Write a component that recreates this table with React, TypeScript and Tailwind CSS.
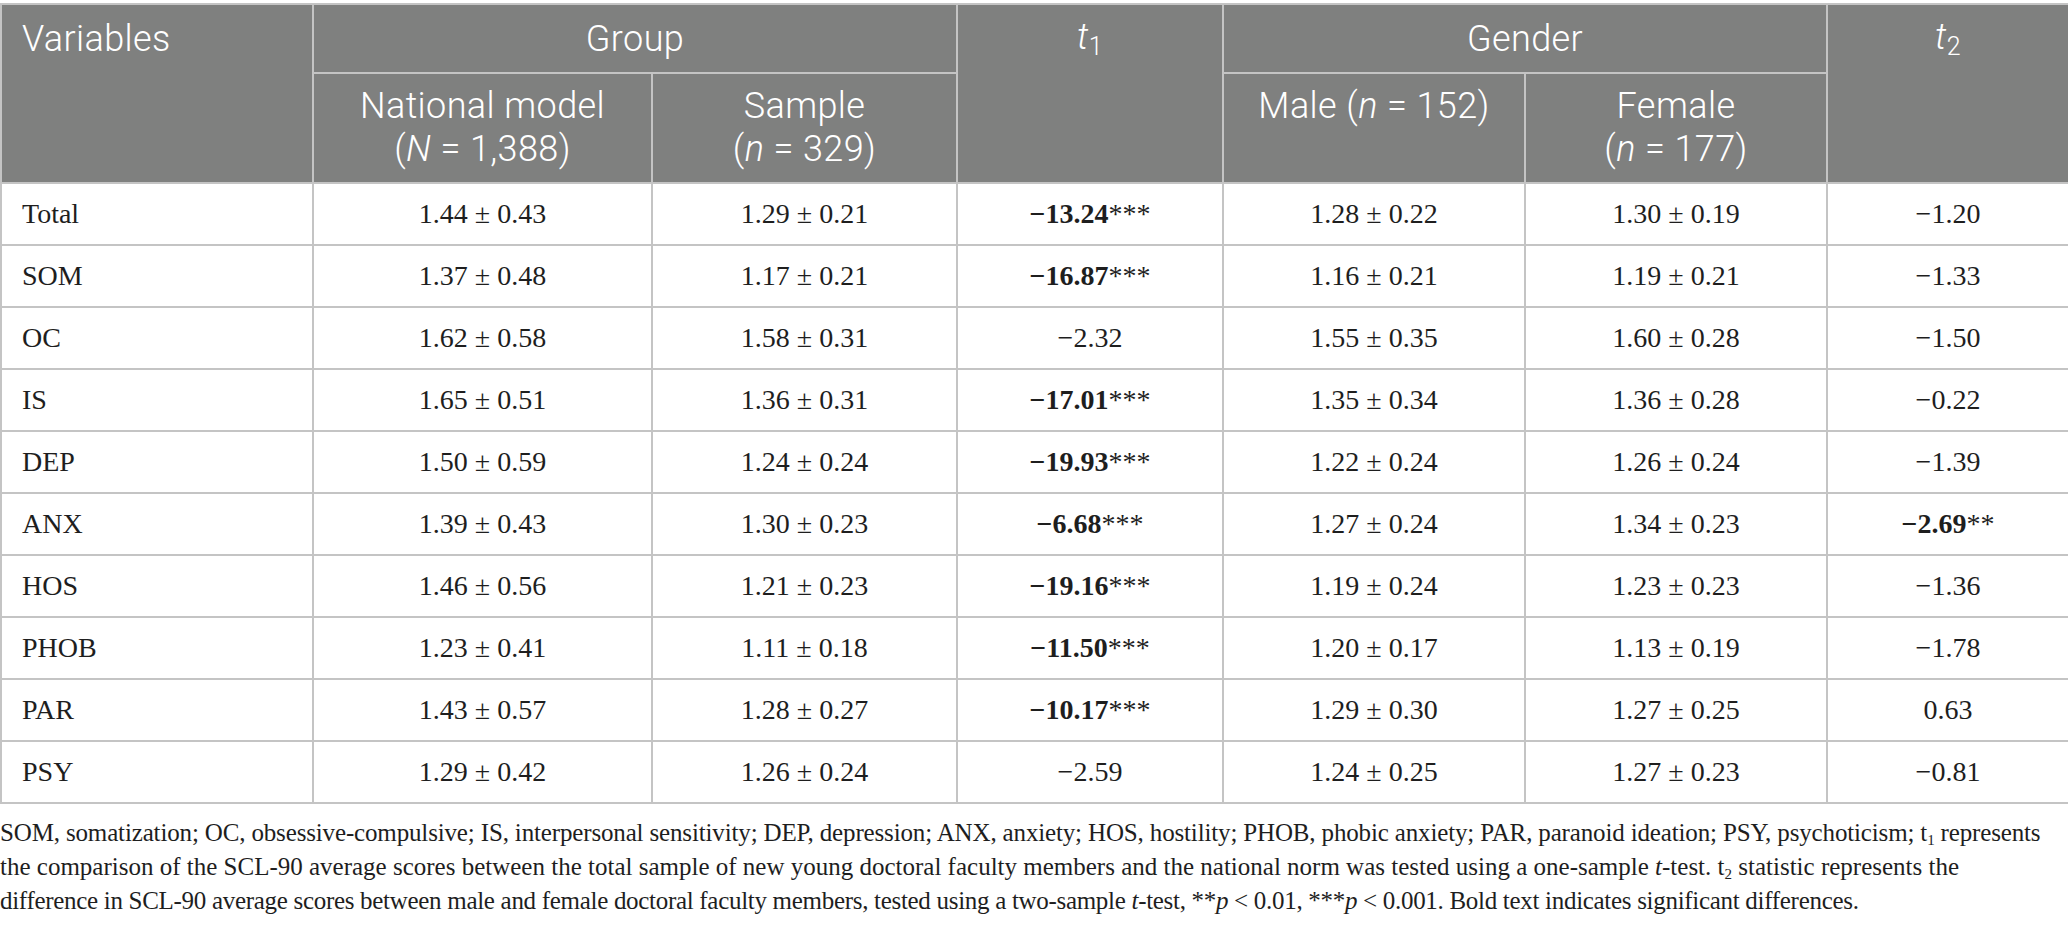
import React from 'react';

const rows = [
  { name: 'Total', nat: '1.44 ± 0.43', sample: '1.29 ± 0.21', t1: '−13.24', t1s: '***', male: '1.28 ± 0.22', female: '1.30 ± 0.19', t2: '−1.20', t2s: '' },
  { name: 'SOM', nat: '1.37 ± 0.48', sample: '1.17 ± 0.21', t1: '−16.87', t1s: '***', male: '1.16 ± 0.21', female: '1.19 ± 0.21', t2: '−1.33', t2s: '' },
  { name: 'OC', nat: '1.62 ± 0.58', sample: '1.58 ± 0.31', t1: '−2.32', t1s: '', male: '1.55 ± 0.35', female: '1.60 ± 0.28', t2: '−1.50', t2s: '' },
  { name: 'IS', nat: '1.65 ± 0.51', sample: '1.36 ± 0.31', t1: '−17.01', t1s: '***', male: '1.35 ± 0.34', female: '1.36 ± 0.28', t2: '−0.22', t2s: '' },
  { name: 'DEP', nat: '1.50 ± 0.59', sample: '1.24 ± 0.24', t1: '−19.93', t1s: '***', male: '1.22 ± 0.24', female: '1.26 ± 0.24', t2: '−1.39', t2s: '' },
  { name: 'ANX', nat: '1.39 ± 0.43', sample: '1.30 ± 0.23', t1: '−6.68', t1s: '***', male: '1.27 ± 0.24', female: '1.34 ± 0.23', t2: '−2.69', t2s: '**' },
  { name: 'HOS', nat: '1.46 ± 0.56', sample: '1.21 ± 0.23', t1: '−19.16', t1s: '***', male: '1.19 ± 0.24', female: '1.23 ± 0.23', t2: '−1.36', t2s: '' },
  { name: 'PHOB', nat: '1.23 ± 0.41', sample: '1.11 ± 0.18', t1: '−11.50', t1s: '***', male: '1.20 ± 0.17', female: '1.13 ± 0.19', t2: '−1.78', t2s: '' },
  { name: 'PAR', nat: '1.43 ± 0.57', sample: '1.28 ± 0.27', t1: '−10.17', t1s: '***', male: '1.29 ± 0.30', female: '1.27 ± 0.25', t2: '0.63', t2s: '' },
  { name: 'PSY', nat: '1.29 ± 0.42', sample: '1.26 ± 0.24', t1: '−2.59', t1s: '', male: '1.24 ± 0.25', female: '1.27 ± 0.23', t2: '−0.81', t2s: '' }
];

// value with optional significance stars; stars mean bold
const Stat = ({ v, s }: { v: string; s: string }) =>
  s ? (
    <>
      <span className="font-bold">{v}</span>
      {s}
    </>
  ) : (
    <>{v}</>
  );

const th = 'border-2 border-[#c4c4c4] align-top font-light';
const td = 'border-2 border-[#c4c4c4] text-center h-[62px]';

const App = () => {
  return (
    <div className="w-[2068px] bg-white pt-[3px] text-[#1e1e1e]">
      <table
        className="w-full table-fixed border-collapse"
        style={{ fontFamily: '"Liberation Serif", "DejaVu Serif", serif' }}
      >
        <colgroup>
          <col className="w-[312px]" />
          <col className="w-[339px]" />
          <col className="w-[305px]" />
          <col className="w-[266px]" />
          <col className="w-[302px]" />
          <col className="w-[302px]" />
          <col className="w-[242px]" />
        </colgroup>
        <thead
          className="bg-[#7f807f] text-white text-[36px] leading-[43px] tracking-[0.4px]"
          style={{ fontFamily: 'Roboto, "Open Sans", sans-serif' }}
        >
          <tr className="h-[69px]">
            <th rowSpan={2} className={`${th} text-left pl-[20px] pt-[13px]`}>Variables</th>
            <th colSpan={2} className={`${th} text-center pt-[13px]`}>Group</th>
            <th rowSpan={2} className={`${th} text-center pt-[11px]`}>
              <i>t</i>
              <sub className="text-[25px] not-italic">1</sub>
            </th>
            <th colSpan={2} className={`${th} text-center pt-[13px]`}>Gender</th>
            <th rowSpan={2} className={`${th} text-center pt-[11px]`}>
              <i>t</i>
              <sub className="text-[25px] not-italic">2</sub>
            </th>
          </tr>
          <tr className="h-[110px]">
            <th className={`${th} text-center pt-[11px]`}>
              National model
              <br />(<i>N</i> = 1,388)
            </th>
            <th className={`${th} text-center pt-[11px]`}>
              Sample
              <br />(<i>n</i> = 329)
            </th>
            <th className={`${th} text-center pt-[11px]`}>
              Male (<i>n</i> = 152)
            </th>
            <th className={`${th} text-center pt-[11px]`}>
              Female
              <br />(<i>n</i> = 177)
            </th>
          </tr>
        </thead>
        <tbody className="text-[28px]">
          {rows.map((r) => (
            <tr key={r.name}>
              <td className={`${td} !text-left pl-[20px]`}>{r.name}</td>
              <td className={td}>{r.nat}</td>
              <td className={td}>{r.sample}</td>
              <td className={td}>
                <Stat v={r.t1} s={r.t1s} />
              </td>
              <td className={td}>{r.male}</td>
              <td className={td}>{r.female}</td>
              <td className={td}>
                <Stat v={r.t2} s={r.t2s} />
              </td>
            </tr>
          ))}
        </tbody>
      </table>

      {/* Footnote */}
      <div
        className="mt-[12px] text-[25px] leading-[34px] whitespace-nowrap"
        style={{ fontFamily: '"Liberation Serif", "DejaVu Serif", serif' }}
      >
        <div className="tracking-[-0.15px]">
          SOM, somatization; OC, obsessive-compulsive; IS, interpersonal sensitivity; DEP, depression; ANX, anxiety; HOS,
          hostility; PHOB, phobic anxiety; PAR, paranoid ideation; PSY, psychoticism; t<sub className="text-[15px]">1</sub> represents
        </div>
        <div>
          the comparison of the SCL-90 average scores between the total sample of new young doctoral faculty members and the
          national norm was tested using a one-sample <i>t</i>-test. t<sub className="text-[15px]">2</sub> statistic represents the
        </div>
        <div className="tracking-[-0.3px]">
          difference in SCL-90 average scores between male and female doctoral faculty members, tested using a two-sample{' '}
          <i>t</i>-test, **<i>p</i> &lt; 0.01, ***<i>p</i> &lt; 0.001. Bold text indicates significant differences.
        </div>
      </div>
    </div>
  );
};

export default App;
